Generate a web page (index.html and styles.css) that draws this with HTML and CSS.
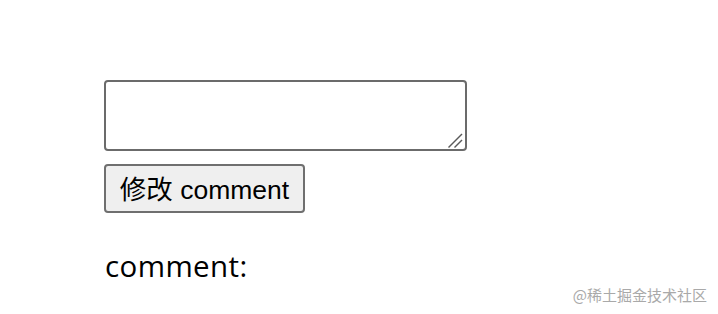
FILE: index.html
```html
<!DOCTYPE html>
<html>
<head>
<meta charset="utf-8">
<link rel="stylesheet" href="styles.css">
</head>
<body>
<div class="page">
  <div class="field">
    <textarea class="box"></textarea>
    <svg class="grip" width="18" height="18" viewBox="0 0 18 18" aria-hidden="true">
      <line x1="2.5" y1="16.5" x2="16" y2="3" stroke="#5a5a5a" stroke-width="1.4"/>
      <line x1="8.5" y1="16.5" x2="16" y2="9" stroke="#5a5a5a" stroke-width="1.4"/>
    </svg>
  </div>
  <button class="btn">修改 comment</button>
  <div class="label">comment:</div>
</div>
<div class="mark">@稀土掘金技术社区</div>
</body>
</html>
```
FILE: styles.css
```css
html, body { margin: 0; padding: 0; background: #fff; }
body { width: 718px; height: 314px; overflow: hidden; position: relative; }
.page {
  display: flex;
  flex-direction: column;
  align-items: flex-start;
  padding: 80px 0 0 104px;
}
.field {
  position: relative;
  width: 363px;
  height: 71px;
}
.box {
  display: block;
  box-sizing: border-box;
  width: 363px;
  height: 71px;
  margin: 0;
  border: 2px solid #6b6b6b;
  border-radius: 4px;
  padding: 4px;
  background: #fff;
  resize: none;
}
.grip {
  position: absolute;
  right: 3px;
  bottom: 2px;
}
.btn {
  box-sizing: border-box;
  margin-top: 13px;
  width: 201px;
  height: 49px;
  padding: 0 0 2px;
  border: 2px solid #6f6f6f;
  border-radius: 4px;
  background: #efefef;
  color: #000;
  font-family: "Liberation Sans", "Noto Sans CJK SC", sans-serif;
  font-size: 26.5px;
}
.label {
  margin-top: 36px;
  padding-left: 1px;
  font-family: "Open Sans", sans-serif;
  font-size: 29.5px;
  letter-spacing: 0.4px;
  line-height: 34px;
  color: #000;
}
.mark {
  position: absolute;
  right: 11px;
  bottom: 10px;
  font-family: "Noto Sans CJK SC", sans-serif;
  font-size: 15px;
  line-height: 18px;
  color: #a9a9a9;
}
```
